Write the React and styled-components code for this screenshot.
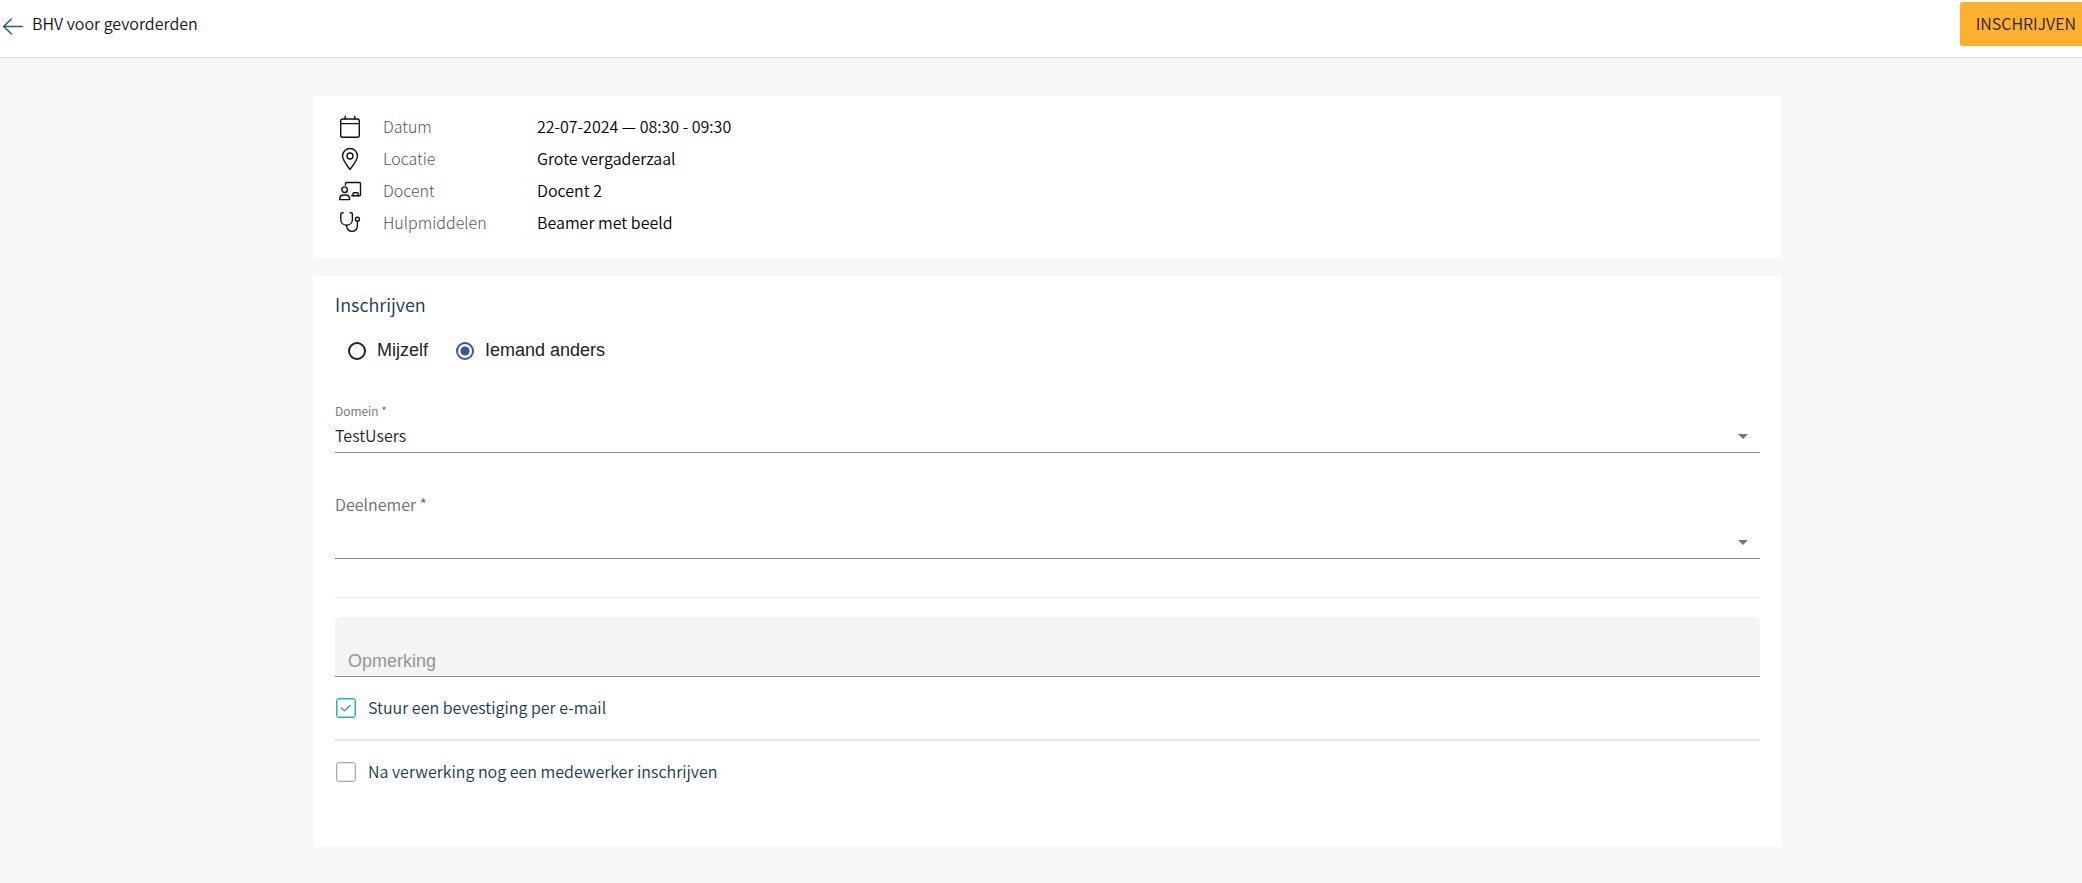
import React, { useState } from "react";
import styled, { createGlobalStyle } from "styled-components";

const sans = `"Noto Sans CJK SC", "Noto Sans", sans-serif`;
const arial = `"Liberation Sans", Arial, sans-serif`;

const GlobalStyle = createGlobalStyle`
  *, *::before, *::after { box-sizing: border-box; }
  body {
    margin: 0;
    background: #f7f7f7;
    color: #111;
    font: 350 16px/24px ${sans};
  }
`;

const Header = styled.header`
  display: flex;
  justify-content: space-between;
  align-items: flex-start;
  height: 58px;
  padding-top: 2px;
  background: #fff;
  border-bottom: 1px solid #d9dcdc;
`;

const BackLink = styled.a`
  display: flex;
  align-items: center;
  gap: 6px;
  height: 42px;
  padding-left: 2px;
  color: inherit;
  text-decoration: none;
`;

const Title = styled.h1`
  margin: 0;
  font: 350 16px/24px ${sans};
`;

const PrimaryButton = styled.button`
  height: 44px;
  padding: 0 6px 2px 16px;
  border: 0;
  border-radius: 2px 0 0 2px;
  background: #ffb12e;
  color: #222;
  font: 350 16px/24px ${sans};
  text-transform: uppercase;
`;

const Main = styled.main`
  display: flex;
  flex-direction: column;
  gap: 17px;
  padding: 38px 300px 36px 313px;
`;

const Card = styled.section`
  background: #fff;
  padding: ${(p) => p.$padding};
`;

const Details = styled.dl`
  margin: 0;
`;

const DetailRow = styled.div`
  display: grid;
  grid-template-columns: 25px 134px 1fr;
  column-gap: 20px;
  align-items: center;
  height: 32px;
`;

const Term = styled.dt`
  color: #555;
  font-weight: 300;
`;

const Value = styled.dd`
  margin: 0;
  color: #000;
`;

const Icon = styled.svg`
  display: block;
  width: ${(p) => p.$size || 24}px;
  height: ${(p) => p.$size || 24}px;
  fill: none;
  stroke: ${(p) => p.$color || "#111"};
  stroke-width: 1.4;
  stroke-linecap: round;
  stroke-linejoin: round;
`;

const SectionTitle = styled.h2`
  margin: 0;
  color: #12394b;
  font: 350 18px/24px ${sans};
`;

const RadioGroup = styled.div`
  display: flex;
  gap: 28px;
  padding: 22px 0 0 13px;
`;

const RadioLabel = styled.label`
  display: flex;
  align-items: flex-start;
  gap: 11px;
  color: #212121;
  font: 400 18px/24px ${arial};
`;

const Radio = styled.input`
  appearance: none;
  width: 18px;
  height: 18px;
  margin: 4px 0 0;
  border: 2px solid #212121;
  border-radius: 50%;

  &:checked {
    border-color: #3f51b5;
    background: radial-gradient(closest-side, #3f51b5 60%, transparent 70%);
  }
`;

const Field = styled.div`
  display: flex;
  flex-direction: column;
  gap: ${(p) => p.$gap}px;
  margin-top: ${(p) => p.$top}px;
`;

const FieldLabel = styled.label`
  color: #6c6c6c;
  font-size: ${(p) => (p.$small ? 12 : 16)}px;
  line-height: ${(p) => (p.$small ? 16 : 24)}px;
`;

const SelectBox = styled.div`
  display: grid;
  align-items: center;
  border-bottom: 1px solid #8c8c8c;
`;

const Select = styled.select`
  grid-area: 1 / 1;
  appearance: none;
  width: 100%;
  height: 32px;
  padding: 0 0 2px;
  border: 0;
  border-radius: 0;
  background: transparent;
  color: #212121;
  font: 350 16px/24px ${sans};
`;

const Caret = styled.span`
  grid-area: 1 / 1;
  justify-self: end;
  margin-right: 12px;
  border: 5px solid transparent;
  border-top-color: #757575;
  border-bottom-width: 0;
  pointer-events: none;
`;

const Rule = styled.hr`
  height: ${(p) => p.$weight}px;
  margin: ${(p) => p.$margin};
  border: 0;
  background: #e8e8e8;
`;

const Remark = styled.textarea`
  display: block;
  width: 100%;
  height: 60px;
  margin-bottom: 18px;
  padding: 32px 13px 0;
  border: 0;
  border-bottom: 1px solid #8c8c8c;
  border-radius: 5px 5px 0 0;
  background: #f4f4f4;
  color: #212121;
  font: 400 18px/24px ${arial};
  resize: none;
  overflow: hidden;

  &::placeholder { color: #959595; }
`;

const CheckLabel = styled.label`
  display: flex;
  align-items: flex-start;
  gap: 12px;
  padding-left: 1px;
  color: #12394b;
`;

const CheckBox = styled.span`
  display: grid;
  place-items: center;
  margin-top: 3px;

  > * { grid-area: 1 / 1; }
  > svg { visibility: hidden; pointer-events: none; }
  > input:checked + svg { visibility: visible; }
`;

const CheckInput = styled.input`
  appearance: none;
  width: 20px;
  height: 20px;
  margin: 0;
  border: 1px solid #adadad;
  border-radius: 3px;
  background: #fff;
  box-shadow: inset 0 0 0 1px #e2e2e2;

  &:checked { border-color: #20b5ac; box-shadow: inset 0 0 0 1px #8fdcd6; }
`;

const icons = {
  calendar: (
    <>
      <rect x="2.7" y="4" width="18.6" height="18.2" rx="2" />
      <path d="M3 8.6h18M7.2 1.2V4M16.8 1.2V4" />
    </>
  ),
  pin: (
    <>
      <path d="M12 22.5C9.6 19.2 4.5 13 4.5 9a7.5 7.5 0 0 1 15 0c0 4-5.1 10.2-7.5 13.5z" />
      <circle cx="12" cy="9" r="3" />
    </>
  ),
  teacher: (
    <>
      <path d="M7.4 6V4.8c0-.8.6-1.3 1.4-1.3h12.4c.8 0 1.3.5 1.3 1.3v10.6c0 .8-.5 1.3-1.3 1.3h-7.5" />
      <path d="M15 16.7v-1.9c0-.6.4-1 1-1h3.2c.6 0 1 .4 1 1v1.9" />
      <circle cx="6.6" cy="10.7" r="2.8" />
      <path d="M1.6 20.6c0-2.8 1.8-4.6 4.2-4.6h1.8c2.4 0 4.1 1.8 4.1 4.6z" />
    </>
  ),
  stethoscope: (
    <>
      <path d="M5.2 1.6 3.6 2c-.5.1-.8.5-.8 1v5.4c0 3.4 2.5 5.8 5.8 5.8s5.8-2.4 5.8-5.8V3c0-.5-.3-.9-.8-1L12 1.6" />
      <path d="M8.6 14.2v.9c0 3 2.4 5.3 5.4 5.3s5.4-2.3 5.4-5.3v-4.8" />
      <circle cx="19.4" cy="8.3" r="2" />
    </>
  ),
};

const details = [
  ["calendar", "Datum", "22-07-2024 — 08:30 - 09:30"],
  ["pin", "Locatie", "Grote vergaderzaal"],
  ["teacher", "Docent", "Docent 2"],
  ["stethoscope", "Hulpmiddelen", "Beamer met beeld"],
];

function Check({ label, checked, onChange }) {
  return (
    <CheckLabel>
      <CheckBox>
        <CheckInput type="checkbox" checked={checked} onChange={(e) => onChange(e.target.checked)} />
        <Icon $size={20} $color="#20b5ac" viewBox="0 0 20 20" aria-hidden="true">
          <path d="M5.5 10l3 2.8 5.8-5.5" />
        </Icon>
      </CheckBox>
      {label}
    </CheckLabel>
  );
}

export default function App() {
  const [who, setWho] = useState("other");
  const [confirm, setConfirm] = useState(true);
  const [another, setAnother] = useState(false);

  return (
    <>
      <GlobalStyle />
      <Header>
        <BackLink href="#">
          <Icon $color="#2a5a73" viewBox="0 0 24 24" aria-hidden="true">
            <path d="M20.3 15.5H1.6M9.4 8L1.6 15.5l7.8 7.6" />
          </Icon>
          <Title>BHV voor gevorderden</Title>
        </BackLink>
        <PrimaryButton type="button">Inschrijven</PrimaryButton>
      </Header>
      <Main>
        <Card $padding="14px 25px 21px">
          <Details>
            {details.map(([icon, term, value]) => (
              <DetailRow key={term}>
                <Icon viewBox="0 -1 24 24" aria-hidden="true">{icons[icon]}</Icon>
                <Term>{term}</Term>
                <Value>{value}</Value>
              </DetailRow>
            ))}
          </Details>
        </Card>
        <Card $padding="16px 22px 64px">
          <SectionTitle>Inschrijven</SectionTitle>
          <RadioGroup role="radiogroup" aria-label="Inschrijven">
            <RadioLabel>
              <Radio type="radio" name="who" checked={who === "self"} onChange={() => setWho("self")} />
              Mijzelf
            </RadioLabel>
            <RadioLabel>
              <Radio type="radio" name="who" checked={who === "other"} onChange={() => setWho("other")} />
              Iemand anders
            </RadioLabel>
          </RadioGroup>
          <Field $gap={1} $top={41}>
            <FieldLabel htmlFor="domain" $small>Domein *</FieldLabel>
            <SelectBox>
              <Select id="domain" defaultValue="TestUsers">
                <option>TestUsers</option>
              </Select>
              <Caret />
            </SelectBox>
          </Field>
          <Field $gap={10} $top={39}>
            <FieldLabel htmlFor="participant">Deelnemer *</FieldLabel>
            <SelectBox>
              <Select id="participant" defaultValue="">
                <option value="" />
              </Select>
              <Caret />
            </SelectBox>
          </Field>
          <Rule $weight={1} $margin="38px 0 19px" />
          <Remark placeholder="Opmerking" aria-label="Opmerking" />
          <Check label="Stuur een bevestiging per e-mail" checked={confirm} onChange={setConfirm} />
          <Rule $weight={2} $margin="20px 0 18px" />
          <Check label="Na verwerking nog een medewerker inschrijven" checked={another} onChange={setAnother} />
        </Card>
      </Main>
    </>
  );
}
